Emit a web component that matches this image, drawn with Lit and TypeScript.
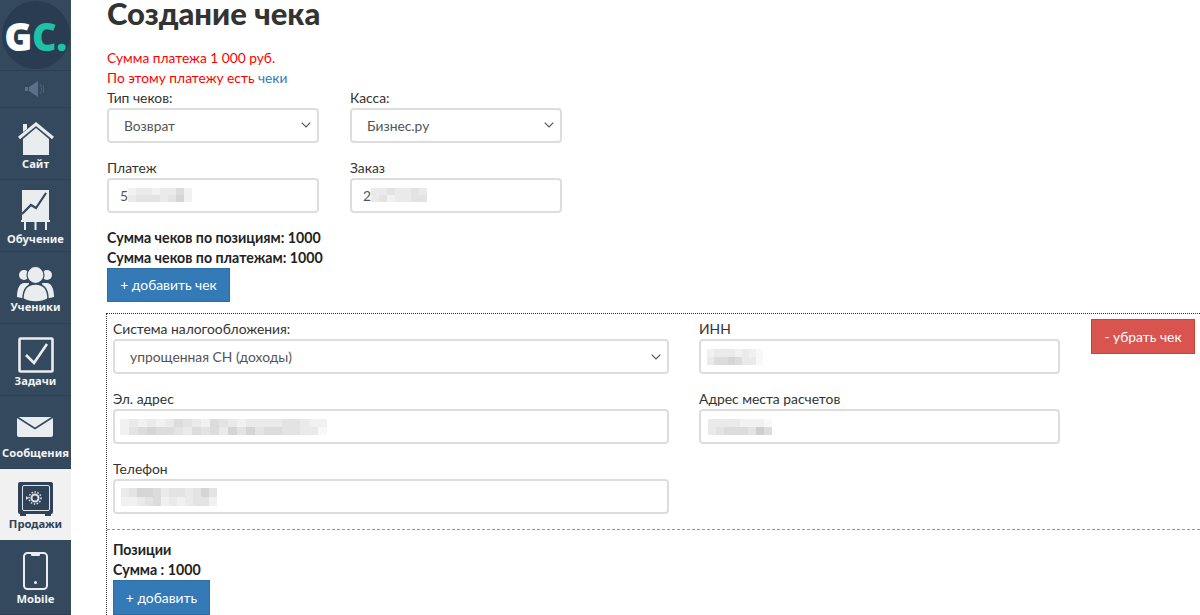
import { LitElement, html, css, svg } from "lit";
import { customElement } from "lit/decorators.js";

const blur = (rows: string[], w: number, h: number) => html`<span class="blur" style="grid-template-columns:repeat(${rows[0].length},${w}px);grid-auto-rows:${h}px">
  ${rows.flatMap((r) => [...r].map((c) => { const g = 255 - parseInt(c, 16) * 7; return html`<i style="background:rgb(${g},${g},${g})"></i>`; }))}
</span>`;

const L = "#e9edef";
const B = "#34495e";
const navItems = [
  { label: "Сайт", h: 72, lab: 56, icon: svg`<path d="M23 24v-8h4v5z" fill="${L}"/><path d="M19 30l17-14 17 14" fill="none" stroke="${L}" stroke-width="3"/><path d="M23 31l13-11 13 11v16H23z" fill="${L}"/>` },
  { label: "Обучение", h: 72, lab: 59, icon: svg`<path d="M22 10h27v30H22z" fill="${L}"/><path d="M22 34l9-9 5 3 10-15" fill="none" stroke="${B}" stroke-width="2.200"/><path d="M21 40h29v2H21zM24 42h2v8h-2zM34.500 42h2v8h-2zM45 42h2v8h-2z" fill="${L}"/>` },
  { label: "Ученики", h: 72, lab: 55, icon: svg`<circle cx="24" cy="23" r="5" fill="${L}"/><circle cx="47" cy="23" r="5" fill="${L}"/><path d="M17 45c0-9 3-14 7-14h5l-3 16zM54 45c0-9-3-14-7-14h-5l3 16z" fill="${L}"/><path d="M23 47c0-9 4-15 12.500-15S48 38 48 47c-7 4-18 4-25 0z" fill="${L}" stroke="${B}" stroke-width="1.500"/><circle cx="35.500" cy="23" r="8.500" fill="${L}" stroke="${B}" stroke-width="1.200"/>` },
  { label: "Задачи", h: 72, lab: 57, icon: svg`<rect x="19.500" y="14.500" width="33" height="33" fill="none" stroke="${L}" stroke-width="2.600" rx="1"/><path d="M26 31l8 8 13-19" fill="none" stroke="${L}" stroke-width="2.600"/>` },
  { label: "Сообщения", h: 73, lab: 57, icon: svg`<rect x="17" y="21" width="36" height="20" rx="2" fill="${L}"/><path d="M17 21l18 11.500 18-11.500" fill="none" stroke="${B}" stroke-width="1.500"/>` },
  { label: "Продажи", h: 71, lab: 55, active: true, icon: svg`<path d="M20 44h6v3h-6zM45 44h6v3h-6z" fill="#2f4258"/><rect x="18" y="13" width="35" height="32" rx="2" fill="#2f4258"/><rect x="22.500" y="16.500" width="27" height="25" rx="1.500" fill="none" stroke="#dfe4e8" stroke-width="1"/><circle cx="35" cy="29" r="3.500" fill="none" stroke="#dfe4e8" stroke-width="2"/><circle cx="35" cy="29" r="6" fill="none" stroke="#dfe4e8" stroke-width="1.500" stroke-dasharray="1.500 1.500"/><path d="M26 27l2.500 2-2.500 2z" fill="#dfe4e8"/>` },
  { label: "Mobile", h: 75, lab: 59, icon: svg`<rect x="24" y="13" width="23" height="36" rx="3.500" fill="none" stroke="${L}" stroke-width="2"/><path d="M31 13h9v2a1 1 0 0 1-1 1h-7a1 1 0 0 1-1-1z" fill="${L}"/><circle cx="35.500" cy="42.500" r="1.500" fill="${L}"/>` },
];

const chevron = html`<svg class="chev" width="10" height="6" viewBox="0 0 10 6"><path d="M.7.7L5 5 9.300.7" fill="none" stroke="#555" stroke-width="1.200"/></svg>`;

@customElement("app-root")
export class AppRoot extends LitElement {
  static styles = css`
    :host { display: block; width: 1200px; height: 615px; overflow: hidden; background: #fff; font-family: "Lato", "Noto Sans", sans-serif; font-size: 14px; color: #333; }
    * { box-sizing: border-box; }
    .page { display: flex; height: 615px; }
    .side { flex: none; width: 71px; background: #34495e; display: flex; flex-direction: column; overflow: hidden; }
    .logo { height: 71px; flex: none; border-bottom: 1px solid #2e4054; display: flex; align-items: center; justify-content: center; }
    .logo-c { width: 68px; height: 68px; border-radius: 50%; background: #2a3c52; display: flex; align-items: center; justify-content: center; font: 800 38px/1 "Open Sans", sans-serif; letter-spacing: -.5px; padding-top: 1px; }
    .logo-c b { color: #fff; font-weight: 800; }
    .logo-c em { color: #1fc2a7; font-style: normal; }
    .mute { height: 37px; flex: none; border-bottom: 1px solid #2e4054; display: flex; align-items: center; justify-content: center; }
    .nav { flex: none; border-bottom: 1px solid #2e4054; display: flex; flex-direction: column; align-items: center; color: #f2f4f5; font-weight: 700; font-size: 11.200px; line-height: 14px; white-space: nowrap; font-family: "Noto Sans", sans-serif; }
    .nav svg { display: block; margin-bottom: 2px; flex: none; overflow: visible; }
    .nav.active { background: #f1f1f1; color: #2f4258; border-bottom: none; }
    .main { flex: 1; min-width: 0; padding-left: 36px; display: flex; flex-direction: column; align-items: flex-start; }
    h1 { margin: 0; font-size: 31px; line-height: 26px; font-weight: 900; color: #333; height: 49px; white-space: nowrap; }
    .red { color: #f00; font-size: 13.750px; line-height: 20px; white-space: nowrap; }
    .red a { color: #337ab7; }
    .row { display: flex; gap: 31px; }
    .row2 { margin-top: 15px; }
    .f { display: flex; flex-direction: column; }
    .f label { font-size: 13.850px; line-height: 20px; color: #333; white-space: nowrap; }
    .w212 { width: 212px; }
    .ctl { height: 35px; border: 2px solid #ddd; border-radius: 4px; display: flex; align-items: center; color: #555; font-size: 13.850px; background: #fff; }
    .sel { padding: 0 6px 0 15px; justify-content: space-between; }
    .inp { padding-left: 11px; }
    .chev { flex: none; }
    .blur { display: inline-grid; flex: none; }
    .blur i { display: block; }
    .totals { margin-top: 15px; font-weight: 700; font-size: 14.200px; line-height: 20px; color: #222; white-space: nowrap; }
    .btn { display: flex; align-items: center; justify-content: center; height: 35px; color: #fff; font-size: 13.850px; background: #337ab7; border: 1px solid #2e6da4; white-space: nowrap; }
    .add-check { width: 123px; }
    .box { margin-top: 11px; width: 1094px; flex: 1; border-top: 1px dotted #333; border-left: 1px dotted #333; margin-left: -1px; padding: 5px 0 0 6px; }
    .cols { display: flex; }
    .gridf { display: grid; grid-template-columns: 556px 361px; column-gap: 30px; row-gap: 15px; }
    .rm { margin-left: 31px; width: 104px; height: 35px; background: #d9534f; border-color: #d43f3a; }
    .sep { margin: 15px 0 10px -6px; border-top: 1px dashed #999; }
    .pos { font-weight: 700; font-size: 14.200px; line-height: 20px; color: #222; }
    .add { width: 97px; }
  `;

  render() {
    return html`<div class="page">
      <aside class="side">
        <div class="logo"><div class="logo-c"><b>G</b><em>C.</em></div></div>
        <div class="mute"><svg width="24" height="18" viewBox="0 0 24 18"><path d="M1 7h3v4H1zM5 7l9-6v16l-9-6z" fill="#5a7189"/><path d="M16 4c2 3 2 7 0 10M19 5c1 3 1 5 0 8" fill="none" stroke="#4c627a" stroke-width="1"/></svg></div>
        ${navItems.map((n) => html`<div class="nav ${n.active ? "active" : ""}" style="height:${n.h}px">
          <svg width="71" height="${n.lab - 9}" viewBox="0 0 71 ${n.lab - 9}">${n.icon}</svg>${n.label}
        </div>`)}
      </aside>
      <main class="main">
        <h1>Создание чека</h1>
        <div class="red">Сумма платежа 1 000 руб.</div>
        <div class="red">По этому платежу есть <a>чеки</a></div>
        <div class="row">
          <div class="f w212"><label>Тип чеков:</label><div class="ctl sel">Возврат${chevron}</div></div>
          <div class="f w212"><label>Касса:</label><div class="ctl sel">Бизнес.ру${chevron}</div></div>
        </div>
        <div class="row row2">
          <div class="f w212"><label>Платеж</label><div class="ctl inp">5${blur(["23323352", "34443462"], 8, 7)}</div></div>
          <div class="f w212"><label>Заказ</label><div class="ctl inp">2${blur(["3343343", "3423344"], 8, 7)}</div></div>
        </div>
        <div class="totals">Сумма чеков по позициям: 1000<br />Сумма чеков по платежам: 1000</div>
        <div class="btn add-check">+ добавить чек</div>
        <section class="box">
          <div class="cols">
            <div class="gridf">
              <div class="f"><label>Система налогообложения:</label><div class="ctl sel">упрощенная СН (доходы)${chevron}</div></div>
              <div class="f"><label>ИНН</label><div class="ctl inp" style="padding-left:6px">${blur(["23332321", "35565331"], 7, 8)}</div></div>
              <div class="f"><label>Эл. адрес</label><div class="ctl inp" style="padding-left:5px">${blur(["23232354325432333344322", "24565543545364645544331"], 9, 8)}</div></div>
              <div class="f"><label>Адрес места расчетов</label><div class="ctl inp" style="padding-left:7px">${blur(["33332221", "34555475"], 8, 8)}</div></div>
              <div class="f"><label>Телефон</label><div class="ctl inp" style="padding-left:6px">${blur(["346653443464", "223452323442"], 8, 9)}</div></div>
            </div>
            <div class="btn rm">- убрать чек</div>
          </div>
          <div class="sep"></div>
          <div class="pos">Позиции<br />Сумма : 1000</div>
          <div class="btn add">+ добавить</div>
        </section>
      </main>
    </div>`;
  }
}
